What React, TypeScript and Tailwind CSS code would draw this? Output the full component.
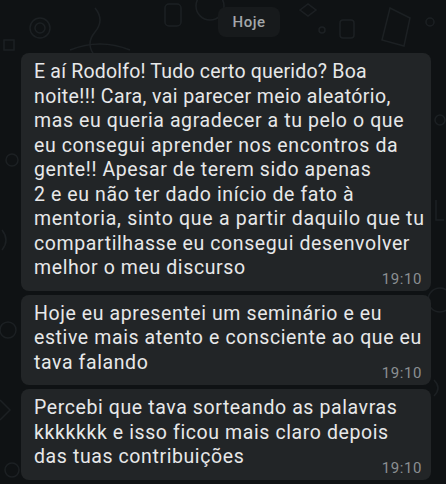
import { Fragment } from 'react';

type Line = string | { text: string; track: string };

const messages: { lines: Line[]; time: string }[] = [
  {
    lines: [
      { text: 'E aí Rodolfo! Tudo certo querido? Boa', track: 'tracking-[0.2px]' },
      { text: 'noite!!! Cara, vai parecer meio aleatório,', track: 'tracking-[0.4px]' },
      'mas eu queria agradecer a tu pelo o que',
      'eu consegui aprender nos encontros da',
      'gente!! Apesar de terem sido apenas',
      '2 e eu não ter dado início de fato à',
      { text: 'mentoria, sinto que a partir daquilo que tu', track: 'tracking-[0.7px]' },
      'compartilhasse eu consegui desenvolver',
      'melhor o meu discurso',
    ],
    time: '19:10',
  },
  {
    lines: [
      'Hoje eu apresentei um seminário e eu',
      'estive mais atento e consciente ao que eu',
      'tava falando',
    ],
    time: '19:10',
  },
  {
    lines: [
      'Percebi que tava sorteando as palavras',
      'kkkkkkk e isso ficou mais claro depois',
      'das tuas contribuições',
    ],
    time: '19:10',
  },
];

function LineText({ line }: { line: Line }) {
  if (typeof line === 'string') return <span>{line}</span>;
  return <span className={line.track}>{line.text}</span>;
}

function Doodles() {
  // faint wallpaper doodles behind the chat
  return (
    <svg className="absolute inset-0 h-full w-full" viewBox="0 0 446 484" fill="none" stroke="#1c2023" strokeWidth="1.5">
      <circle cx="40" cy="28" r="10" />
      <circle cx="40" cy="28" r="5" />
      <path d="M95 8 q10 12 0 24 q-10 12 0 24" />
      <rect x="165" y="4" width="16" height="22" rx="4" />
      <circle cx="210" cy="6" r="14" />
      <path d="M300 10 l8 -6 l8 6 l-8 6z" />
      <circle cx="322" cy="30" r="3" />
      <rect x="340" y="20" width="14" height="18" rx="3" />
      <path d="M390 8 l20 10 l-6 28 l-22 -6z" />
      <circle cx="430" cy="22" r="4" />
      <path d="M4 40 h10 v10 h-10z" />
      <path d="M70 50 q30 -12 60 0" />
      <circle cx="12" cy="160" r="6" />
      <path d="M2 230 q8 10 0 20" />
      <circle cx="8" cy="330" r="8" />
      <path d="M0 400 l10 10 l-10 10" />
      <circle cx="440" cy="120" r="5" />
      <path d="M436 200 v20 h8" />
      <circle cx="440" cy="300" r="12" />
      <path d="M434 380 q8 8 0 16" />
      <circle cx="12" cy="470" r="7" />
    </svg>
  );
}

export default function App() {
  return (
    <div
      className="relative h-[484px] w-[446px] overflow-hidden bg-[#0f1214]"
      style={{ fontFamily: 'Roboto, "Noto Sans", sans-serif' }}
    >
      <Doodles />
      <div className="relative flex flex-col pt-[7px]">
        <div className="ml-[218px] flex h-[30px] w-[62px] items-center justify-center rounded-lg bg-[#171a1c] text-[15px] font-medium tracking-[0.5px] text-[#a3a7aa]">
          Hoje
        </div>
        <div className="mt-[16px] flex flex-col gap-[4px] pl-[21px] pr-[15px]">
          {messages.map((m, i) => (
            <div key={i} className="rounded-lg bg-[#222527] pb-[10px] pl-[13px] pr-[9px] pt-[7px]">
              <div className="whitespace-nowrap text-[19.5px] leading-[24.5px] tracking-[0.6px] text-[#e7e8e9]">
                {m.lines.slice(0, -1).map((line, j) => (
                  <Fragment key={j}>
                    <LineText line={line} />
                    <br />
                  </Fragment>
                ))}
                <div className="flex items-end justify-between">
                  <LineText line={m.lines[m.lines.length - 1]} />
                  <span className="translate-y-[6px] text-[15px] leading-[16px] tracking-[0.6px] text-[#8b8f92]">{m.time}</span>
                </div>
              </div>
            </div>
          ))}
        </div>
      </div>
    </div>
  );
}
